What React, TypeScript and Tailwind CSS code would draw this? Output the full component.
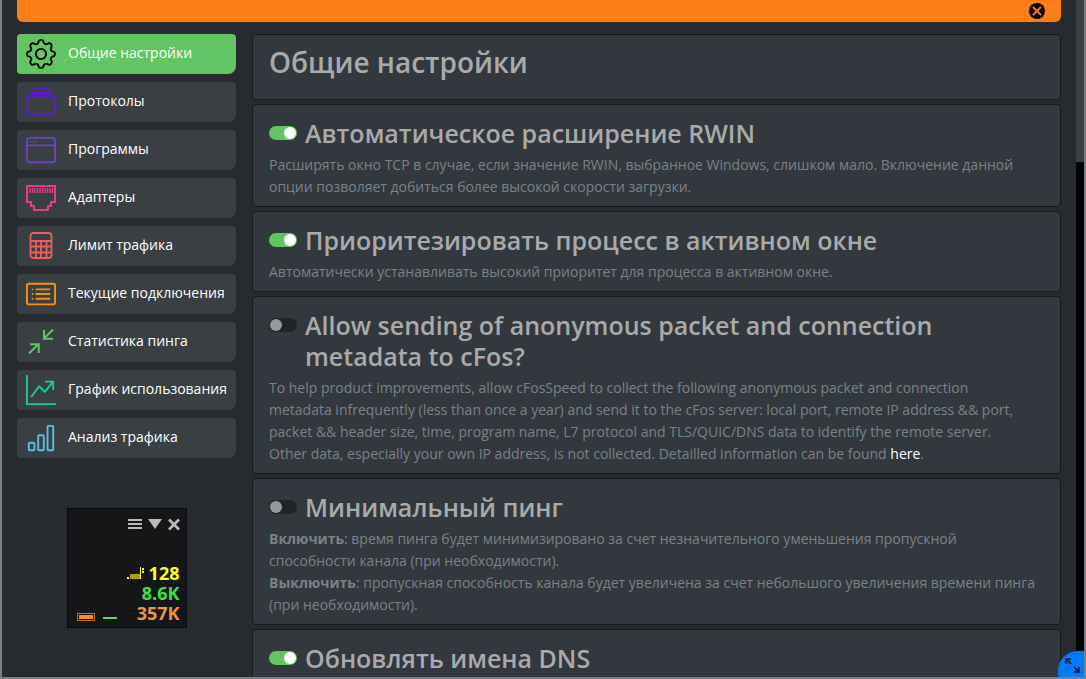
import type { ReactNode } from "react";
import type { IconType } from "react-icons";
import { BsBarChart, BsCardList, BsGear, BsGraphUpArrow, BsWindow } from "react-icons/bs";

const ProtocolIcon = () => (
  <svg width="30" height="30" viewBox="0 0 30 30" fill="none" stroke="currentColor" strokeWidth="2">
    <rect x="1" y="10" width="28" height="17" rx="1" />
    <path d="M4 7h22M5 5h20M8 2h14" />
  </svg>
);

const AdapterIcon = () => (
  <svg width="30" height="30" viewBox="0 0 30 30" fill="none" stroke="currentColor" strokeWidth="2">
    <path d="M1 3h28v16h-4v4h-3v4h-14v-4h-3v-4h-4z" />
    <path
      d="M4 5v5M6.500 5v5M9 5v5M11.500 5v5M14 5v5M16.500 5v5M19 5v5M21.500 5v5M24 5v5M26.500 5v5"
      strokeWidth="1.4"
    />
  </svg>
);

const LimitIcon = () => (
  <svg width="30" height="30" viewBox="0 0 30 30" fill="none" stroke="currentColor" strokeWidth="1.8">
    <rect x="4.500" y="2" width="21" height="25" rx="3" />
    <path d="M5 10h20M5 15.500h20M5 21.500h20M10 10v17M15 10v17M20.500 10v17" />
  </svg>
);

const PingIcon = () => (
  <svg width="30" height="30" viewBox="0 0 30 30" fill="none" stroke="currentColor" strokeWidth="2">
    <path d="M27 2.500L18 11.500M18 3v8.700h9M3 26.500L12 17.500M4 17.300h8.700v8.700" />
  </svg>
);

const bs = (Icon: IconType) => <Icon size={30} />;

const navItems = [
  { label: "Общие настройки", icon: bs(BsGear), color: "text-black", active: true },
  { label: "Протоколы", icon: <ProtocolIcon />, color: "text-[#5b1cc4]" },
  { label: "Программы", icon: bs(BsWindow), color: "text-[#6f42c1]" },
  { label: "Адаптеры", icon: <AdapterIcon />, color: "text-[#e0408a]" },
  { label: "Лимит трафика", icon: <LimitIcon />, color: "text-[#ee5f5b]" },
  { label: "Текущие подключения", icon: bs(BsCardList), color: "text-[#f89406]" },
  { label: "Статистика пинга", icon: <PingIcon />, color: "text-[#62c462]" },
  { label: "График использования", icon: bs(BsGraphUpArrow), color: "text-[#20c997]" },
  { label: "Анализ трафика", icon: bs(BsBarChart), color: "text-[#5bc0de]" },
];

const Sidebar = () => (
  <aside className="w-[219px] shrink-0">
    <nav className="flex flex-col gap-2">
      {navItems.map((item) => (
        <button
          key={item.label}
          type="button"
          className={`flex h-10 w-full items-center gap-3 rounded-sm rounded-br-lg pl-[9px] text-left text-[14px] whitespace-nowrap text-white ${
            item.active ? "bg-[#62c462]" : "bg-[#3a3f44]"
          }`}
        >
          <span className={`shrink-0 ${item.color}`}>{item.icon}</span>
          <span className="pb-1">{item.label}</span>
        </button>
      ))}
    </nav>
    <TrafficWidget />
  </aside>
);

const TrafficWidget = () => (
  <div className="mx-auto mt-[50px] flex h-[120px] w-[120px] flex-col justify-between border border-[#08090a] bg-[#141618] px-[6px] pt-[8px] pb-[4px]">
    <div className="flex items-center justify-end gap-[6px] text-[#bbb]">
      <button type="button" aria-label="menu">
        <svg width="14" height="14" viewBox="0 0 14 14" fill="currentColor">
          <path d="M0 2h14v2H0zM0 6h14v2H0zM0 10h14v2H0z" />
        </svg>
      </button>
      <button type="button" aria-label="minimize">
        <svg width="14" height="14" viewBox="0 0 14 14" fill="currentColor">
          <path d="M0 2h14L7 12z" />
        </svg>
      </button>
      <button type="button" aria-label="close">
        <svg width="12" height="14" viewBox="0 0 12 14" fill="none" stroke="currentColor" strokeWidth="2.600">
          <path d="M1 2.500l10 10M11 2.500l-10 10" />
        </svg>
      </button>
    </div>
    <div className="flex items-end justify-between">
      <svg width="44" height="12" viewBox="0 0 44 12" fill="none" className="ml-[3px]">
        <rect x="0.500" y="2.500" width="17" height="7" stroke="#c96a10" />
        <rect x="2" y="4" width="14" height="4" fill="#ff8c1a" />
        <rect x="26" y="6" width="14" height="2" fill="#62d862" />
      </svg>
      <div className="text-right text-[18px] leading-5 font-bold">
        <div className="flex items-center justify-end gap-1 text-[#ffff20]">
          <svg width="18" height="14" viewBox="0 0 18 14">
            <path d="M0 11h2v2H0z" fill="#ffff20" />
            <path d="M3 8h10v5H3z" fill="#a8a010" />
            <path d="M13 1h1v12h-1zM15 2h2v2h-2zM15 5h2v2h-2z" fill="#ffff20" />
          </svg>
          128
        </div>
        <div className="text-[#3fe03f]">8.6K</div>
        <div className="text-[#f0963c]">357K</div>
      </div>
    </div>
  </div>
);

interface SettingProps {
  id: string;
  title: string;
  checked?: boolean;
  children?: ReactNode;
}

const Setting = ({ id, title, checked = false, children }: SettingProps) => (
  <section className="rounded-sm border border-[#16191c] bg-[#32383e] px-4 pt-[13px] pb-2">
    <div className="flex items-start gap-2">
      <input
        id={id}
        type="checkbox"
        defaultChecked={checked}
        className="mt-2 flex h-[14px] w-7 shrink-0 appearance-none items-center rounded-full bg-[#212427] px-px before:size-3 before:rounded-full before:bg-[#999] checked:justify-end checked:bg-[#62c462] checked:before:bg-white"
      />
      <h2 className="text-[25px] leading-[31px] font-semibold text-[#aaa]">
        <label htmlFor={id}>{title}</label>
      </h2>
    </div>
    <p className="mt-[5px] text-[14px] leading-[22px] text-[#7a8288]">{children}</p>
  </section>
);

const App = () => {
  return (
    <div className="relative flex h-screen overflow-hidden border-x-2 border-b-2 border-[#7a8085] bg-[#272b30] font-['Open_Sans','Noto_Sans',sans-serif]">
      <div className="flex min-w-0 flex-1 flex-col px-[15px]">
        <div className="flex h-[22px] shrink-0 items-center justify-end rounded-b-md bg-[#fd7e14] pr-4">
          <button type="button" aria-label="close">
            <svg width="16" height="16" viewBox="0 0 16 16">
              <circle cx="8" cy="8" r="8" fill="#000" />
              <path d="M4 4l8 8M12 4l-8 8" stroke="#fd7e14" strokeWidth="1.800" />
            </svg>
          </button>
        </div>
        <div className="mt-3 flex gap-4">
          <Sidebar />
          <main className="flex min-w-0 flex-1 flex-col gap-1">
            <section className="rounded-sm border border-[#16191c] bg-[#32383e] px-4 pt-3 pb-[21px]">
              <h1 className="text-[28px] leading-[31px] font-semibold text-[#aaa]">Общие настройки</h1>
            </section>
            <Setting id="rwin" title="Автоматическое расширение RWIN" checked>
              Расширять окно TCP в случае, если значение RWIN, выбранное Windows, слишком мало. Включение данной
              опции позволяет добиться более высокой скорости загрузки.
            </Setting>
            <Setting id="active-window" title="Приоритезировать процесс в активном окне" checked>
              Автоматически устанавливать высокий приоритет для процесса в активном окне.
            </Setting>
            <Setting id="metadata" title="Allow sending of anonymous packet and connection metadata to cFos?">
              To help product improvements, allow cFosSpeed to collect the following anonymous packet and connection
              <br />
              metadata infrequently (less than once a year) and send it to the cFos server: local port, remote IP
              address &amp;&amp; port,
              <br />
              packet &amp;&amp; header size, time, program name, L7 protocol and TLS/QUIC/DNS data to identify the
              remote server.
              <br />
              Other data, especially your own IP address, is not collected. Detailled information can be found{" "}
              <a href="#here" className="text-white">
                here
              </a>
              .
            </Setting>
            <Setting id="min-ping" title="Минимальный пинг">
              <b>Включить</b>: время пинга будет минимизировано за счет незначительного уменьшения пропускной
              способности канала (при необходимости).
              <br />
              <b>Выключить</b>: пропускная способность канала будет увеличена за счет небольшого увеличения времени
              пинга (при необходимости).
            </Setting>
            <Setting id="dns" title="Обновлять имена DNS" checked />
          </main>
        </div>
      </div>
      <div className="w-2 shrink-0 bg-black">
        <div className="h-[162px] bg-[#3a3f44]" />
      </div>
      <button
        type="button"
        aria-label="expand"
        className="absolute -right-0.5 -bottom-0.5 flex size-7 items-center justify-center rounded-tl-[20px] bg-[#007bff]"
      >
        <svg width="18" height="18" viewBox="0 0 18 18" fill="none" stroke="#001428" strokeWidth="1.600">
          <path d="M3 3l5 5M3 8V3h5M11 11l5 5M16 11v5h-5" />
        </svg>
      </button>
    </div>
  );
};

export default App;
